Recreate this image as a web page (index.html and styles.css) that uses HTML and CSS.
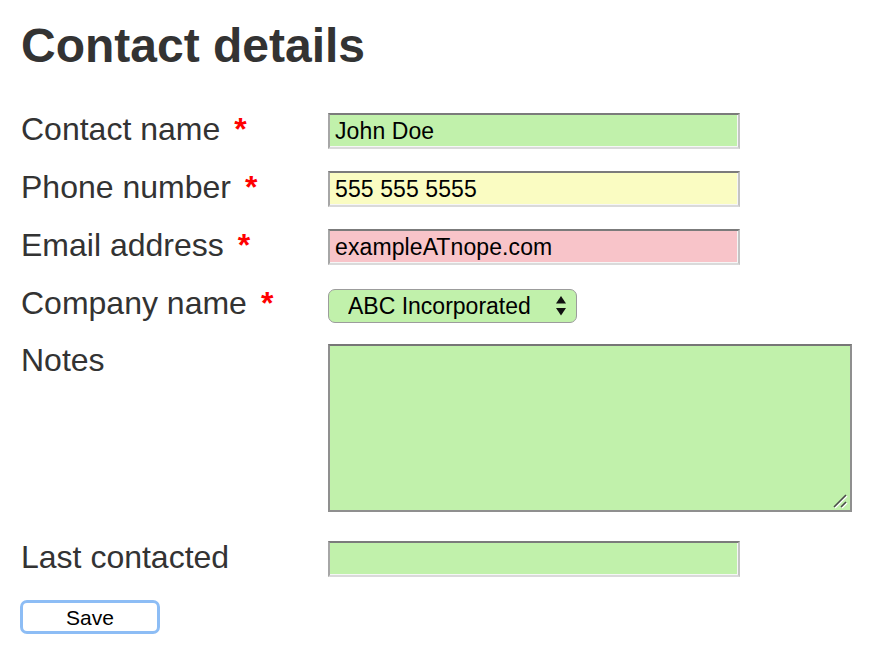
FILE: index.html
```html
<!DOCTYPE html>
<html lang="en">
<head>
<meta charset="utf-8">
<title>Contact details</title>
<link rel="stylesheet" href="styles.css">
</head>
<body>
<div class="page">
  <h1 class="title">Contact details</h1>
  <form class="form">
    <div class="row">
      <label class="label" for="name">Contact name<span class="req">*</span></label>
      <input class="field ok" id="name" type="text" value="John Doe">
    </div>
    <div class="row">
      <label class="label" for="phone">Phone number<span class="req">*</span></label>
      <input class="field warn" id="phone" type="text" value="555 555 5555">
    </div>
    <div class="row">
      <label class="label" for="email">Email address<span class="req">*</span></label>
      <input class="field bad" id="email" type="text" value="exampleATnope.com">
    </div>
    <div class="row row-select">
      <label class="label" for="company">Company name<span class="req">*</span></label>
      <span class="select-wrap">
        <select class="select" id="company">
          <option>ABC Incorporated</option>
        </select>
        <svg class="arrows" width="10" height="20" viewBox="0 0 10 20" aria-hidden="true">
          <path d="M5 0 L10 7.5 L0 7.5 Z" fill="#111"/>
          <path d="M0 12 L10 12 L5 19.5 Z" fill="#111"/>
        </svg>
      </span>
    </div>
    <div class="row row-notes">
      <label class="label" for="notes">Notes</label>
      <span class="notes-wrap">
        <textarea class="notes" id="notes"></textarea>
        <svg class="grip" width="16" height="16" viewBox="0 0 16 16" aria-hidden="true">
          <path d="M2 15 L14 3" stroke="#ffffff" stroke-width="1.4"/>
          <path d="M1 14 L13 2" stroke="#4a4a4a" stroke-width="1.6"/>
          <path d="M9 15 L14 10" stroke="#ffffff" stroke-width="1.4"/>
          <path d="M8 14 L13 9" stroke="#4a4a4a" stroke-width="1.6"/>
        </svg>
      </span>
    </div>
    <div class="row row-last">
      <label class="label" for="last">Last contacted</label>
      <input class="field ok" id="last" type="text" value="">
    </div>
    <div class="actions">
      <button class="save" type="button">Save</button>
    </div>
  </form>
</div>
</body>
</html>
```

FILE: styles.css
```css
html, body {
  margin: 0;
  padding: 0;
  background: #ffffff;
}

body {
  font-family: "Liberation Sans", Arial, Helvetica, sans-serif;
  color: #333333;
}

.page {
  padding: 18px 0 0 21px;
}

.title {
  margin: 0;
  font-size: 48px;
  line-height: 56px;
  font-weight: bold;
  color: #333333;
}

.form {
  margin: 39px 0 0 0;
  display: flex;
  flex-direction: column;
  align-items: flex-start;
}

.row {
  display: flex;
  align-items: flex-start;
  margin-bottom: 22px;
}

.row-select {
  margin-bottom: 21px;
}

.row-notes {
  margin-bottom: 29px;
}

.row-last {
  margin-bottom: 23px;
}

.label {
  width: 307px;
  flex: none;
  font-size: 32px;
  line-height: 33px;
  color: #333333;
}

.req {
  color: #ff0000;
  font-weight: bold;
  margin-left: 14px;
}

.field {
  box-sizing: border-box;
  width: 412px;
  height: 36px;
  margin: 0;
  padding: 0 5px;
  font-family: "Liberation Sans", Arial, Helvetica, sans-serif;
  font-size: 23px;
  letter-spacing: 0.1px;
  color: #000000;
  border-style: solid;
  border-width: 2px;
  border-color: #7b7b7b #c4c4c4 #dadada #a6a6a6;
  box-shadow: inset -1px -1px 0 #f6f6f6;
  outline: none;
}

.ok {
  background: #c1f1ab;
}

.warn {
  background: #fafcc2;
}

.bad {
  background: #f8c4c9;
}

.select-wrap {
  position: relative;
  display: inline-block;
  margin-top: 2px;
}

.select {
  -webkit-appearance: none;
  appearance: none;
  box-sizing: border-box;
  width: 249px;
  height: 34px;
  margin: 0;
  padding: 0 0 0 19px;
  border: 1px solid #9c9c9c;
  border-radius: 7px;
  background: #c1f1ab;
  font-family: "Liberation Sans", Arial, Helvetica, sans-serif;
  font-size: 23px;
  color: #000000;
  outline: none;
}

.arrows {
  position: absolute;
  left: 228px;
  top: 7px;
  pointer-events: none;
}

.notes-wrap {
  position: relative;
  display: block;
}

.notes {
  display: block;
  box-sizing: border-box;
  width: 524px;
  height: 168px;
  margin: 0;
  padding: 2px;
  border: 2px solid #8f8f8f;
  border-top-color: #767676;
  background: #c1f1ab;
  font-family: "Liberation Sans", Arial, Helvetica, sans-serif;
  font-size: 23px;
  outline: none;
  resize: none;
}

.grip {
  position: absolute;
  right: 3px;
  bottom: 3px;
  pointer-events: none;
}

.actions {
  display: flex;
}

.save {
  box-sizing: border-box;
  width: 140px;
  height: 34px;
  margin: 0 0 0 -1px;
  padding: 2px 0 0 0;
  border: 3px solid #8dbdf5;
  border-radius: 7px;
  background: #ffffff;
  font-family: "Liberation Sans", Arial, Helvetica, sans-serif;
  font-size: 21px;
  color: #000000;
}
```
